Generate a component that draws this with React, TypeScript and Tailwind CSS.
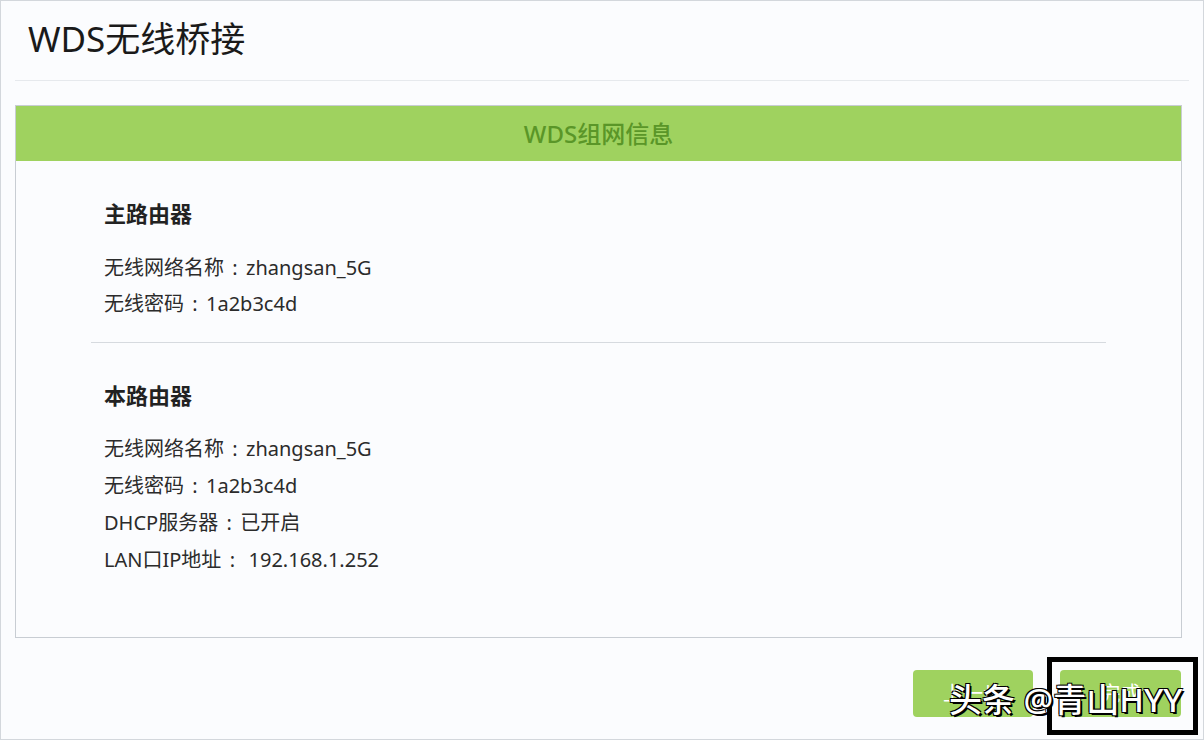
const cjk = "font-['Noto_Sans','Noto_Sans_CJK_SC',sans-serif]";

function InfoLine({ label, value }: { label: string; value: string }) {
  return (
    <div className="text-[20px] leading-[36px] text-[#2b2b2b]">
      {label}
      <span className="inline-block w-[22px] text-center">:</span>
      {value}
    </div>
  );
}

export default function App() {
  return (
    <div className={`relative flex h-[740px] w-[1204px] flex-col border border-[#d3d7dc] bg-[#fbfcfe] ${cjk}`}>
      {/* Title */}
      <div className="mx-[14px] flex h-[80px] items-center border-b border-[#e6e9ed] px-[13px] pb-[4px]">
        <h1 className="text-[35px] font-normal leading-none text-[#1a1a1a]">WDS无线桥接</h1>
      </div>

      {/* Panel */}
      <div className="mx-[14px] mt-[24px] h-[533px] w-[1167px] border border-[#c8cdd3] bg-[#fbfcfe]">
        <div className="flex h-[55px] items-center justify-center bg-[#9fd25f] text-[24px] font-medium text-[#5a9628]">
          WDS组网信息
        </div>
        <div className="px-[75px] pt-[34px]">
          <div className="pl-[13px]">
            <div className="text-[22px] font-bold leading-[36px] text-[#222]">主路由器</div>
            <div className="mt-[19px]">
              <InfoLine label="无线网络名称" value="zhangsan_5G" />
              <InfoLine label="无线密码" value="1a2b3c4d" />
            </div>
          </div>
          <div className="mt-[20px] border-t border-[#d6dadf]" />
          <div className="pl-[13px] pt-[34px]">
            <div className="text-[22px] font-bold leading-[36px] text-[#222]">本路由器</div>
            <div className="mt-[17px] [&>div]:leading-[37px]">
              <InfoLine label="无线网络名称" value="zhangsan_5G" />
              <InfoLine label="无线密码" value="1a2b3c4d" />
              <InfoLine label="DHCP服务器" value="已开启" />
              <InfoLine label="LAN口IP地址" value={'\u00a0192.168.1.252'} />
            </div>
          </div>
        </div>
      </div>

      {/* Buttons */}
      <div className="mr-[22px] mt-[32px] flex justify-end gap-[27px]">
        <button className="h-[47px] w-[120px] rounded-[4px] bg-[#9fd25f] text-[20px] text-white">上一步</button>
        <button className="h-[47px] w-[121px] rounded-[4px] bg-[#9fd25f] text-[20px] text-white">完成</button>
      </div>

      {/* Highlight box */}
      <div className="absolute left-[1046px] top-[656px] h-[78px] w-[151px] border-[5px] border-black" />

      {/* Watermark */}
      <div className="absolute left-[948px] top-[682px] whitespace-nowrap text-[33px] font-medium leading-none text-white [text-shadow:2px_2px_0_#000,-1px_-1px_0_#000,1px_-1px_0_#000,-1px_1px_0_#000]">
        头条 @青山HYY
      </div>
    </div>
  );
}
